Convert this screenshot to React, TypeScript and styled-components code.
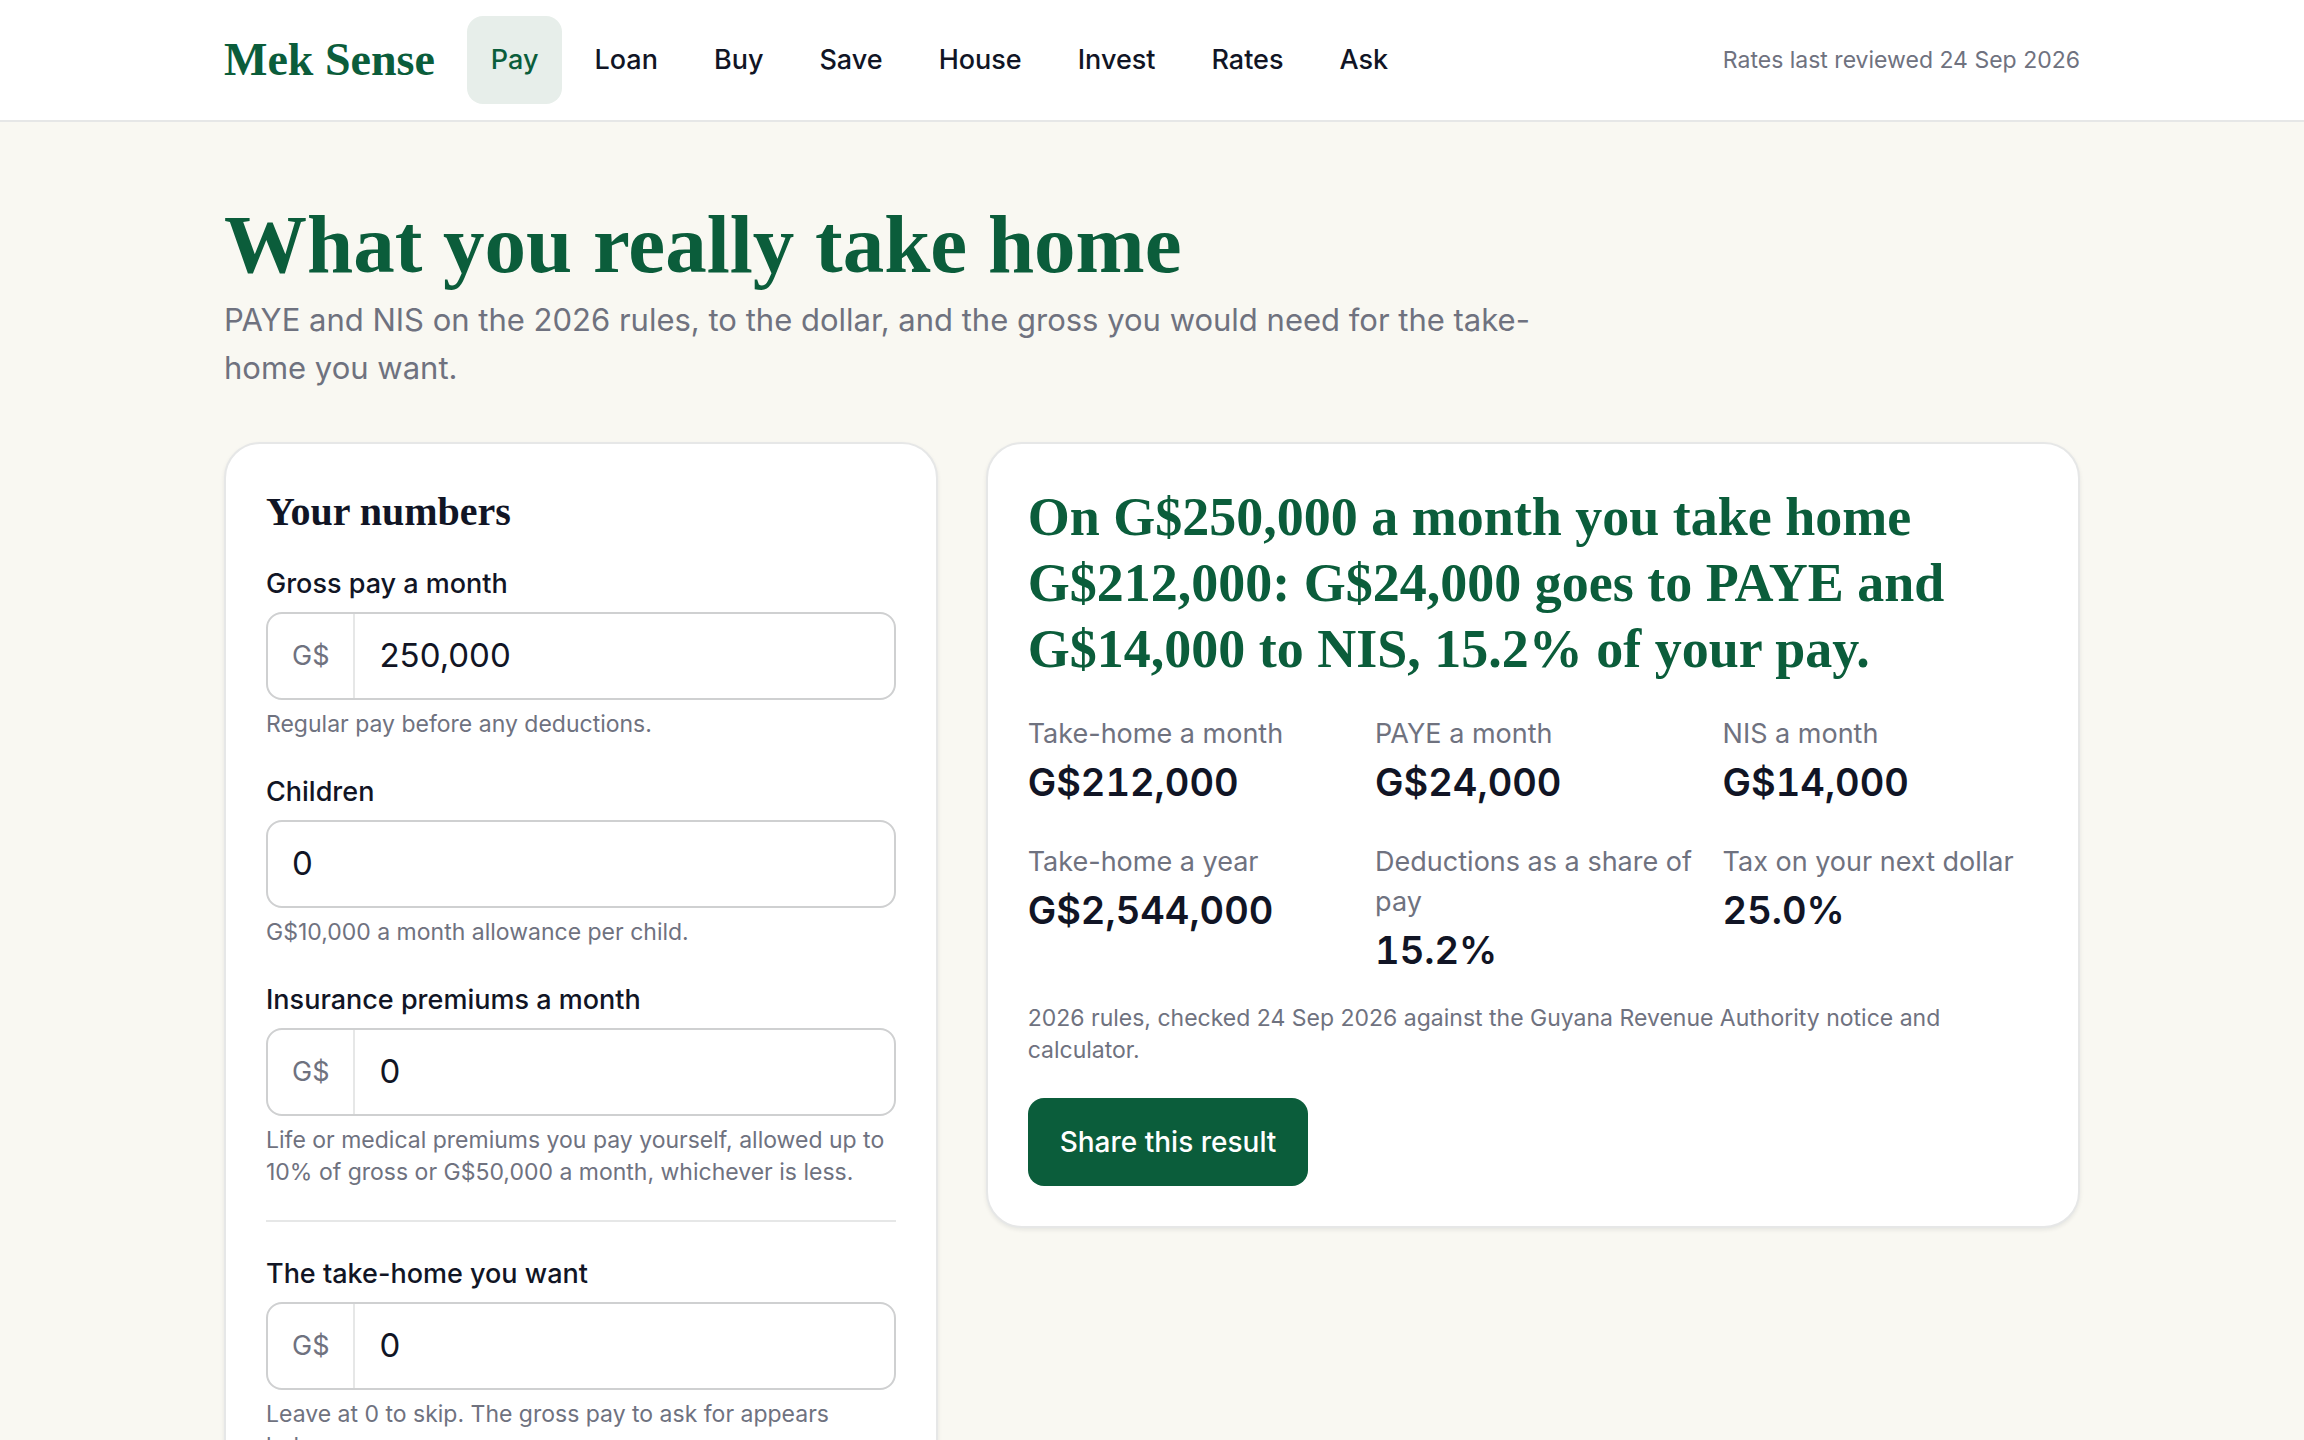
import React, { useState } from "react";
import styled, { createGlobalStyle } from "styled-components";

const color = {
  page: "#f9f8f2",
  surface: "#ffffff",
  green: "#0b5d3b",
  tint: "#e7eeea",
  ink: "#111525",
  muted: "#6f727f",
  line: "#e6e7e7",
  field: "#cfd0d1",
};

const sans = `Inter, "Liberation Sans", sans-serif`;
const serif = `"Liberation Serif", serif`;

const GlobalStyle = createGlobalStyle`
  *, *::before, *::after { box-sizing: border-box; }
  body {
    margin: 0;
    background: ${color.page};
    color: ${color.ink};
    font-family: ${sans};
    font-size: 27px;
    line-height: 40px;
  }
  h1, h2, p, dl, dt, dd { margin: 0; }
`;

const Header = styled.header`
  background: ${color.surface};
  border-bottom: 2px solid ${color.line};
`;

const Container = styled.div`
  width: 100%;
  max-width: 1920px;
  margin: 0 auto;
  padding: 0 32px;
`;

const Bar = styled(Container)`
  display: flex;
  align-items: center;
  gap: 32px;
  padding-top: 16px;
  padding-bottom: 16px;
`;

const Brand = styled.a`
  font-family: ${serif};
  font-size: 46px;
  font-weight: 700;
  line-height: 56px;
  color: ${color.green};
  text-decoration: none;
  white-space: nowrap;
`;

const Nav = styled.nav`
  display: flex;
  gap: 8px;
`;

const NavLink = styled.a<{ $active?: boolean }>`
  display: flex;
  align-items: center;
  height: 88px;
  padding: 0 24px;
  border-radius: 16px;
  font-weight: 500;
  text-decoration: none;
  color: ${(p) => (p.$active ? color.green : color.ink)};
  background: ${(p) => (p.$active ? color.tint : "transparent")};
`;

const Reviewed = styled.p`
  margin-left: auto;
  font-size: 23px;
  line-height: 32px;
  color: ${color.muted};
  white-space: nowrap;
`;

const Main = styled(Container).attrs({ as: "main" })`
  padding-top: 80px;
  padding-bottom: 96px;
`;

const PageTitle = styled.h1`
  font-family: ${serif};
  font-size: 83px;
  font-weight: 700;
  line-height: 84px;
  color: ${color.green};
`;

const Lead = styled.p`
  max-width: 1344px;
  margin-top: 10px;
  font-size: 31px;
  line-height: 48px;
  color: ${color.muted};
`;

const Columns = styled.div`
  display: grid;
  grid-template-columns: minmax(0, 15fr) minmax(0, 23fr);
  align-items: start;
  gap: 48px;
  margin-top: 50px;
`;

const Card = styled.section`
  padding: 40px;
  background: ${color.surface};
  border: 2px solid ${color.line};
  border-radius: 36px;
  box-shadow: 0 2px 4px rgba(17, 21, 37, 0.08);
`;

const CardTitle = styled.h2`
  margin-bottom: 24px;
  font-family: ${serif};
  font-size: 40px;
  font-weight: 700;
  line-height: 56px;
`;

const Fields = styled.form`
  display: flex;
  flex-direction: column;
  gap: 32px;
`;

const FieldBox = styled.div`
  display: flex;
  flex-direction: column;
  gap: 8px;
`;

const Label = styled.label`
  font-weight: 500;
`;

const Control = styled.div`
  display: flex;
  height: 88px;
  border: 2px solid ${color.field};
  border-radius: 16px;
  overflow: hidden;
  &:focus-within {
    border-color: ${color.green};
  }
`;

const Prefix = styled.span`
  display: flex;
  align-items: center;
  padding: 0 24px;
  border-right: 2px solid ${color.line};
  color: ${color.muted};
`;

const Input = styled.input`
  flex: 1;
  min-width: 0;
  padding: 0 24px 2px;
  border: 0;
  outline: 0;
  background: transparent;
  color: inherit;
  font-family: inherit;
  font-size: 33px;
`;

const Hint = styled.p`
  font-size: 23px;
  line-height: 32px;
  color: ${color.muted};
`;

const Divider = styled.hr`
  width: 100%;
  margin: 0;
  border: 0;
  border-top: 2px solid ${color.line};
`;

const Headline = styled.p`
  font-family: ${serif};
  font-size: 54px;
  font-weight: 700;
  line-height: 66px;
  color: ${color.green};
`;

const Stats = styled.dl`
  display: grid;
  grid-template-columns: repeat(3, minmax(0, 1fr));
  gap: 32px;
  margin: 32px 0 24px;
`;

/* Long names may run a little way into the column gap before they wrap. */
const StatName = styled.dt`
  margin-right: -8px;
  color: ${color.muted};
`;

const StatValue = styled.dd`
  font-size: 38px;
  font-weight: 600;
  font-variant-numeric: tabular-nums;
  line-height: 56px;
`;

const ShareButton = styled.button`
  height: 88px;
  margin-top: 32px;
  padding: 0 32px;
  border: 0;
  border-radius: 16px;
  background: ${color.green};
  color: ${color.surface};
  font-family: inherit;
  font-size: 28px;
  font-weight: 500;
  cursor: pointer;
`;

const pages = ["Pay", "Loan", "Buy", "Save", "House", "Invest", "Rates", "Ask"];

const stats = [
  { name: "Take-home a month", value: "G$212,000" },
  { name: "PAYE a month", value: "G$24,000" },
  { name: "NIS a month", value: "G$14,000" },
  { name: "Take-home a year", value: "G$2,544,000" },
  { name: "Deductions as a share of pay", value: "15.2%" },
  { name: "Tax on your next dollar", value: "25.0%" },
];

type FieldProps = {
  id: string;
  label: string;
  hint: string;
  initial: string;
  currency?: boolean;
};

function Field({ id, label, hint, initial, currency }: FieldProps) {
  const [value, setValue] = useState(initial);
  return (
    <FieldBox>
      <Label htmlFor={id}>{label}</Label>
      <Control>
        {currency && <Prefix>G$</Prefix>}
        <Input
          id={id}
          inputMode="numeric"
          aria-describedby={`${id}-hint`}
          value={value}
          onChange={(e) => setValue(e.target.value)}
        />
      </Control>
      <Hint id={`${id}-hint`}>{hint}</Hint>
    </FieldBox>
  );
}

export default function App() {
  return (
    <>
      <GlobalStyle />
      <Header>
        <Bar>
          <Brand href="#">Mek Sense</Brand>
          <Nav>
            {pages.map((page, i) => (
              <NavLink
                key={page}
                href={`#${page.toLowerCase()}`}
                $active={i === 0}
                aria-current={i === 0 ? "page" : undefined}
              >
                {page}
              </NavLink>
            ))}
          </Nav>
          <Reviewed>Rates last reviewed 24 Sep 2026</Reviewed>
        </Bar>
      </Header>
      <Main>
        <PageTitle>What you really take home</PageTitle>
        <Lead>
          PAYE and NIS on the 2026 rules, to the dollar, and the gross you would
          need for the take-home you want.
        </Lead>
        <Columns>
          <Card>
            <CardTitle>Your numbers</CardTitle>
            <Fields onSubmit={(e) => e.preventDefault()}>
              <Field
                id="gross"
                label="Gross pay a month"
                hint="Regular pay before any deductions."
                initial="250,000"
                currency
              />
              <Field
                id="children"
                label="Children"
                hint="G$10,000 a month allowance per child."
                initial="0"
              />
              <Field
                id="premiums"
                label="Insurance premiums a month"
                hint="Life or medical premiums you pay yourself, allowed up to 10% of gross or G$50,000 a month, whichever is less."
                initial="0"
                currency
              />
              <Divider />
              <Field
                id="target"
                label="The take-home you want"
                hint="Leave at 0 to skip. The gross pay to ask for appears below."
                initial="0"
                currency
              />
            </Fields>
          </Card>
          <Card>
            <Headline>
              On G$250,000 a month you take home G$212,000: G$24,000 goes to
              PAYE and G$14,000 to NIS, 15.2% of your pay.
            </Headline>
            <Stats>
              {stats.map((s) => (
                <div key={s.name}>
                  <StatName>{s.name}</StatName>
                  <StatValue>{s.value}</StatValue>
                </div>
              ))}
            </Stats>
            <Hint>
              2026 rules, checked 24 Sep 2026 against the Guyana Revenue
              Authority notice and calculator.
            </Hint>
            <ShareButton type="button">Share this result</ShareButton>
          </Card>
        </Columns>
      </Main>
    </>
  );
}
